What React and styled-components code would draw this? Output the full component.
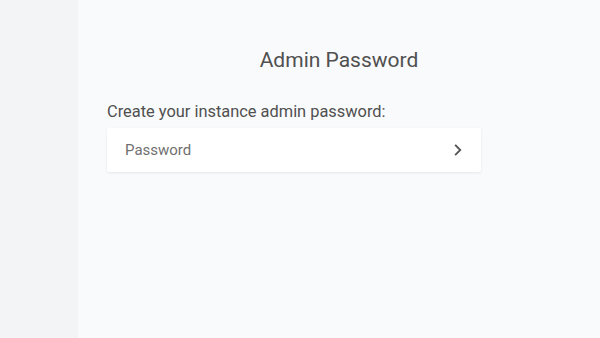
import React from "react";
import styled, { createGlobalStyle } from "styled-components";

const Global = createGlobalStyle`
  html, body { margin: 0; padding: 0; height: 100%; }
  body { font-family: Roboto, "Noto Sans", sans-serif; }
  #root { height: 100%; }
`;

const Layout = styled.div`
  display: flex;
  width: 600px;
  height: 338px;
  overflow: hidden;
`;

const Sidebar = styled.aside`
  width: 78px;
  flex-shrink: 0;
  background: #f3f4f6;
`;

const Main = styled.main`
  flex: 1;
  background: #f9fafb;
  display: flex;
  flex-direction: column;
  padding-top: 46px;
`;

const Title = styled.h1`
  margin: 0;
  text-align: center;
  font-size: 21px;
  font-weight: 400;
  color: #505050;
  line-height: 28px;
`;

const Section = styled.section`
  margin: 27px 0 0 29px;
  width: 374px;
  display: flex;
  flex-direction: column;
`;

const Label = styled.label`
  font-size: 16.4px;
  color: #505050;
  line-height: 22px;
  margin-bottom: 5px;
`;

const InputRow = styled.div`
  height: 44px;
  background: #ffffff;
  box-shadow: 0 1px 3px rgba(0, 0, 0, 0.08);
  border-radius: 2px;
  display: flex;
  align-items: center;
  padding: 0 14px 0 18px;
`;

const Input = styled.input`
  flex: 1;
  border: none;
  outline: none;
  background: transparent;
  font-family: Roboto, sans-serif;
  font-size: 15px;
  color: #333;
  padding: 0;
  &::placeholder { color: #707070; }
`;

const Chevron = styled.span`
  display: flex;
  color: #555;
`;

export default function App() {
  return (
    <>
      <Global />
      <Layout>
        <Sidebar />
        <Main>
          <Title>Admin Password</Title>
          <Section>
            <Label>Create your instance admin password:</Label>
            <InputRow>
              <Input type="password" placeholder="Password" />
              <Chevron>
                <svg width="18" height="18" viewBox="0 0 24 24" fill="none" stroke="currentColor" strokeWidth="2.4" strokeLinecap="square">
                  <path d="M9 6l6 6-6 6" />
                </svg>
              </Chevron>
            </InputRow>
          </Section>
        </Main>
      </Layout>
    </>
  );
}
